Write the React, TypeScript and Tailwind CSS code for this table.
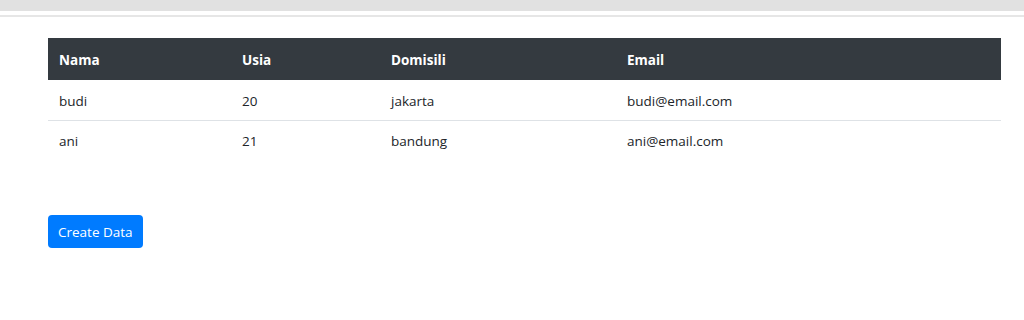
export default function App() {
  const rows = [
    { nama: "budi", usia: "20", domisili: "jakarta", email: "budi@email.com" },
    { nama: "ani", usia: "21", domisili: "bandung", email: "ani@email.com" },
  ];
  return (
    <div
      className="w-[1024px] h-[320px] bg-white text-[#212529]"
      style={{ fontFamily: '"Open Sans", "Noto Sans", sans-serif' }}
    >
      <div className="h-[11px] bg-[#e1e1e1]" />
      <div className="h-[4px] bg-white" />
      <div className="h-[2px] bg-[#e6e6e6]" />
      <div className="px-[48px] pt-[21px]">
        <table className="w-[953px] border-collapse table-fixed text-[13.5px]">
          <colgroup>
            <col className="w-[183px]" />
            <col className="w-[149px]" />
            <col className="w-[236px]" />
            <col />
          </colgroup>
          <thead>
            <tr className="bg-[#343a40] text-white h-[42px]">
              <th className="text-left font-bold px-[11px] pt-[2px] align-middle">Nama</th>
              <th className="text-left font-bold px-[11px] pt-[2px] align-middle">Usia</th>
              <th className="text-left font-bold px-[11px] pt-[2px] align-middle">Domisili</th>
              <th className="text-left font-bold px-[11px] pt-[2px] align-middle">Email</th>
            </tr>
          </thead>
          <tbody>
            {rows.map((r, i) => (
              <tr
                key={r.nama}
                className={`h-[40px] ${i === 0 ? "border-b border-[#dee2e6]" : ""}`}
              >
                <td className="px-[11px] pt-[2px] align-middle">{r.nama}</td>
                <td className="px-[11px] pt-[2px] align-middle">{r.usia}</td>
                <td className="px-[11px] pt-[2px] align-middle">{r.domisili}</td>
                <td className="px-[11px] pt-[2px] align-middle">{r.email}</td>
              </tr>
            ))}
          </tbody>
        </table>
        <button className="mt-[55px] h-[33px] px-[10px] pt-[1px] rounded-[4px] bg-[#007bff] text-white text-[13.5px]">
          Create Data
        </button>
      </div>
    </div>
  );
}
